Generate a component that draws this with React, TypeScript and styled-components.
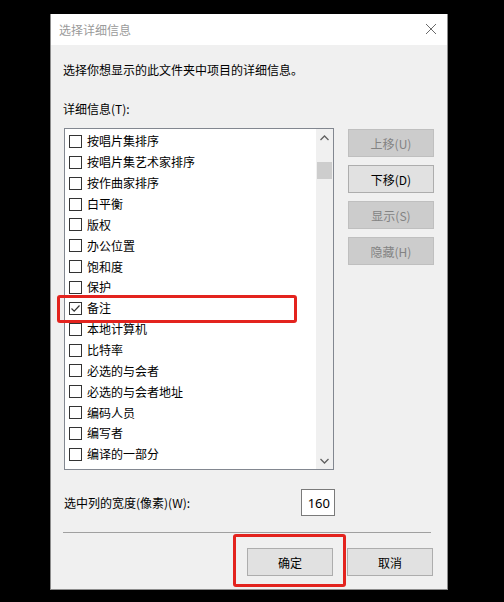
import styled, { createGlobalStyle } from 'styled-components';

const GlobalStyle = createGlobalStyle`
  html, body {
    margin: 0;
    padding: 0;
    background: #000;
  }
  body {
    font-family: 'Noto Sans CJK SC', 'Noto Sans', sans-serif;
    font-size: 12px;
    color: #000;
  }
`;

const items = [
  { label: '按唱片集排序', checked: false },
  { label: '按唱片集艺术家排序', checked: false },
  { label: '按作曲家排序', checked: false },
  { label: '白平衡', checked: false },
  { label: '版权', checked: false },
  { label: '办公位置', checked: false },
  { label: '饱和度', checked: false },
  { label: '保护', checked: false },
  { label: '备注', checked: true, marked: true },
  { label: '本地计算机', checked: false },
  { label: '比特率', checked: false },
  { label: '必选的与会者', checked: false },
  { label: '必选的与会者地址', checked: false },
  { label: '编码人员', checked: false },
  { label: '编写者', checked: false },
  { label: '编译的一部分', checked: false },
];

const sideButtons = [
  { label: '上移(U)', disabled: true },
  { label: '下移(D)', disabled: false },
  { label: '显示(S)', disabled: true },
  { label: '隐藏(H)', disabled: true },
];

export default function App() {
  return (
    <>
      <GlobalStyle />
      <Page>
        <Dialog>
          <TitleBar>
            <Title>选择详细信息</Title>
            <CloseButton aria-label="关闭">
              <svg width="12" height="12" viewBox="0 0 12 12">
                <path d="M1 1 L11 11 M11 1 L1 11" stroke="#6a6a6a" strokeWidth="1" />
              </svg>
            </CloseButton>
          </TitleBar>
          <Body>
            <Description>选择你想显示的此文件夹中项目的详细信息。</Description>
            <FieldLabel>详细信息(T):</FieldLabel>
            <MainRow>
              <ListBox>
                <Rows>
                  {items.map(item => (
                    <Row key={item.label}>
                      <CheckBox>
                        {item.checked && (
                          <svg width="11" height="11" viewBox="0 0 11 11">
                            <path d="M1.5 5.5 L4.2 8.2 L9.5 2.5" stroke="#333" strokeWidth="1.2" fill="none" />
                          </svg>
                        )}
                      </CheckBox>
                      <RowText>{item.label}</RowText>
                      {item.marked && <RowHighlight />}
                    </Row>
                  ))}
                </Rows>
                <ScrollBar>
                  <ScrollArrow>
                    <svg width="9" height="6" viewBox="0 0 9 6">
                      <path d="M0.5 5 L4.5 1 L8.5 5" stroke="#606060" strokeWidth="1.3" fill="none" />
                    </svg>
                  </ScrollArrow>
                  <ScrollTrack>
                    <ScrollThumb />
                  </ScrollTrack>
                  <ScrollArrow>
                    <svg width="9" height="6" viewBox="0 0 9 6">
                      <path d="M0.5 1 L4.5 5 L8.5 1" stroke="#606060" strokeWidth="1.3" fill="none" />
                    </svg>
                  </ScrollArrow>
                </ScrollBar>
              </ListBox>
              <SideButtons>
                {sideButtons.map(b => (
                  <SideButton key={b.label} $disabled={b.disabled}>
                    {b.label}
                  </SideButton>
                ))}
              </SideButtons>
            </MainRow>
            <WidthRow>
              <span>选中列的宽度(像素)(W):</span>
              <WidthInput>160</WidthInput>
            </WidthRow>
            <Separator />
            <Footer>
              <FooterButton>
                确定
                <ButtonHighlight />
              </FooterButton>
              <FooterButton>取消</FooterButton>
            </Footer>
          </Body>
        </Dialog>
      </Page>
    </>
  );
}

const Page = styled.div`
  width: 504px;
  height: 602px;
  padding: 14px 0 0 50px;
  box-sizing: border-box;
`;

const Dialog = styled.div`
  width: 398px;
  height: 576px;
  box-sizing: border-box;
  background: #f0f0f0;
  border: 1px solid #8c8c8c;
  border-top: none;
  display: flex;
  flex-direction: column;
`;

const TitleBar = styled.div`
  height: 30px;
  background: #fff;
  display: flex;
  align-items: center;
  justify-content: space-between;
  padding: 0 10px 1px 8px;
`;

const Title = styled.span`
  color: #9a9a9a;
  font-size: 12px;
`;

const CloseButton = styled.div`
  width: 12px;
  height: 12px;
  display: flex;
`;

const Body = styled.div`
  padding: 17px 0 0 12px;
  display: flex;
  flex-direction: column;
`;

const Description = styled.div`
  line-height: 16px;
`;

const FieldLabel = styled.div`
  line-height: 16px;
  margin-top: 23px;
`;

const MainRow = styled.div`
  display: flex;
  align-items: flex-start;
  gap: 14px;
  margin-top: 11px;
  margin-left: 1px;
`;

const ListBox = styled.div`
  width: 270px;
  height: 342px;
  box-sizing: border-box;
  background: #fff;
  border: 1px solid #828790;
  display: flex;
`;

const Rows = styled.div`
  flex: 1;
  padding: 2px 0 0 4px;
`;

const Row = styled.div`
  position: relative;
  height: 20.87px;
  display: flex;
  align-items: center;
`;

const CheckBox = styled.div`
  width: 13px;
  height: 13px;
  box-sizing: border-box;
  border: 1px solid #333;
  background: #fff;
  display: flex;
  align-items: center;
  justify-content: center;
`;

const RowText = styled.span`
  margin-left: 5px;
  line-height: 16px;
`;

const RowHighlight = styled.div`
  position: absolute;
  left: -12px;
  top: -3px;
  width: 240px;
  height: 28px;
  box-sizing: border-box;
  border: 3px solid #e3231e;
  border-radius: 3px;
`;

const ScrollBar = styled.div`
  width: 17px;
  background: #f0f0f0;
  display: flex;
  flex-direction: column;
`;

const ScrollArrow = styled.div`
  height: 17px;
  display: flex;
  align-items: center;
  justify-content: center;
`;

const ScrollTrack = styled.div`
  flex: 1;
  padding-top: 16px;
`;

const ScrollThumb = styled.div`
  width: 15px;
  height: 17px;
  margin-left: 1px;
  background: #cdcdcd;
`;

const SideButtons = styled.div`
  display: flex;
  flex-direction: column;
  gap: 8px;
  padding-top: 1px;
`;

const SideButton = styled.div<{ $disabled?: boolean }>`
  width: 86px;
  height: 28px;
  box-sizing: border-box;
  display: flex;
  align-items: center;
  justify-content: center;
  background: ${p => (p.$disabled ? '#cccccc' : '#e1e1e1')};
  border: 1px solid ${p => (p.$disabled ? '#bfbfbf' : '#adadad')};
  color: ${p => (p.$disabled ? '#838383' : '#000')};
`;

const WidthRow = styled.div`
  display: flex;
  align-items: center;
  justify-content: space-between;
  width: 271px;
  margin-top: 19px;
  margin-left: 1px;
`;

const WidthInput = styled.div`
  width: 34px;
  height: 27px;
  box-sizing: border-box;
  background: #fff;
  border: 1px solid #7a7a7a;
  display: flex;
  align-items: center;
  justify-content: flex-end;
  padding-right: 4px;
  font-family: 'Noto Sans', 'Liberation Sans', sans-serif;
  font-size: 13px;
`;

const Separator = styled.div`
  width: 368px;
  height: 1px;
  background: #a0a0a0;
  margin-top: 16px;
`;

const Footer = styled.div`
  display: flex;
  justify-content: flex-end;
  gap: 14px;
  margin-top: 15px;
  padding-right: 14px;
`;

const FooterButton = styled.div`
  position: relative;
  width: 86px;
  height: 28px;
  box-sizing: border-box;
  background: #e1e1e1;
  border: 1px solid #adadad;
  display: flex;
  align-items: center;
  justify-content: center;
`;

const ButtonHighlight = styled.div`
  position: absolute;
  left: -15px;
  top: -15px;
  width: 113px;
  height: 53px;
  box-sizing: border-box;
  border: 3px solid #e3231e;
  border-radius: 3px;
`;
